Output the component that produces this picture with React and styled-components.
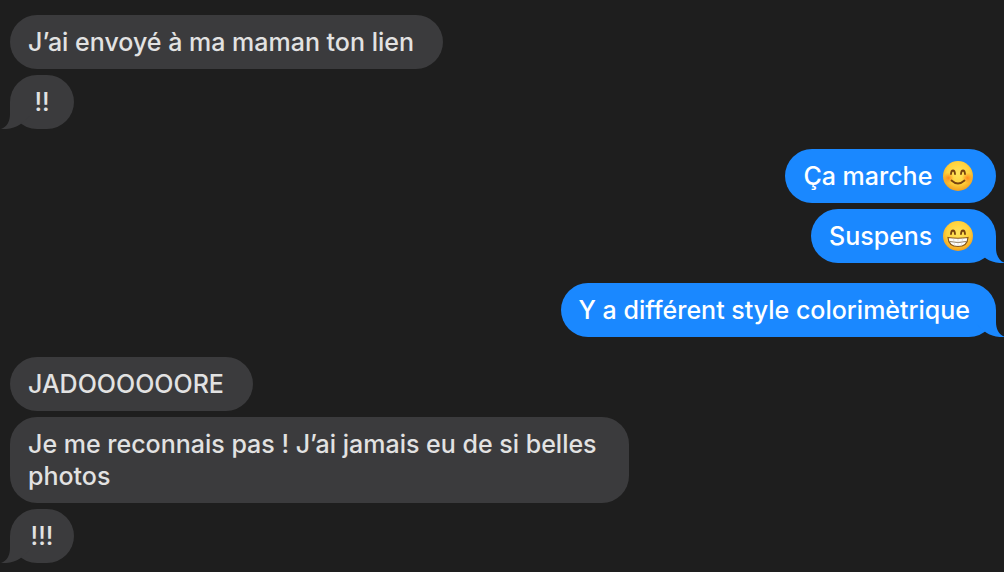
/**
 * Message thread
 *
 * Groups of bubbles, received on the left and sent on the right.
 * The last bubble of a group carries the tail.
 */

import React from 'react';
import styled, { createGlobalStyle, css } from 'styled-components';

const GlobalStyle = createGlobalStyle`
  * {
    box-sizing: border-box;
  }

  body {
    margin: 0;
    background: #1e1e1e;
    font-family: Inter, 'Liberation Sans', sans-serif;
  }
`;

const Thread = styled.main`
  display: flex;
  flex-direction: column;
  gap: 20px;
  padding: 15px 8px 9px 10px;
  overflow: hidden;
`;

const Group = styled.section`
  display: flex;
  flex-direction: column;
  align-items: ${({ $sent }) => ($sent ? 'flex-end' : 'flex-start')};
  gap: 6px;
`;

const Bubble = styled.p`
  position: relative;
  min-width: 64px;
  max-width: min(100%, 619px);
  margin: 0;
  padding: 11px 29px 11px 18px;
  border-radius: 27px;
  background: #3b3b3d;
  color: #e2e2e2;
  font-size: 25px;
  font-weight: 500;
  line-height: 32px;

  ${({ $sent }) => $sent && css`
    padding-right: 26px;
    background: #1a88ff;
    color: #fff;
  `}

  ${({ $short }) => $short && css`
    padding: 11px 18px;
    text-align: center;
  `}
`;

const TailShape = styled.svg`
  position: absolute;
  bottom: 0;
  left: -10px;
  width: 32px;
  height: 27px;
  fill: #3b3b3d;

  ${({ $sent }) => $sent && css`
    right: -10px;
    left: auto;
    fill: #1a88ff;
    transform: scaleX(-1);
  `}
`;

const EmojiIcon = styled.svg`
  width: 32px;
  height: 32px;
  margin: 0 -4px 0 3px;
  vertical-align: top;
`;

const Tail = ({ sent }) => (
  <TailShape $sent={sent} viewBox="0 0 32 27" aria-hidden="true">
    <path d="M10 0V12C10 19 7 25 1 27C8 27.500 15 26 20 22.500L30 14V0Z" />
  </TailShape>
);

const Emoji = ({ name, grin }) => (
  <EmojiIcon viewBox="0 0 32 32" role="img" aria-label={name}>
    <defs>
      <radialGradient id={`${name}-face`} cx=".5" cy=".4" r=".62">
        <stop offset="0" stopColor="#ffe45c" />
        <stop offset=".6" stopColor="#ffd23c" />
        <stop offset="1" stopColor="#f09a1c" />
      </radialGradient>
      <radialGradient id={`${name}-cheek`}>
        <stop offset="0" stopColor="#ff7a1c" stopOpacity=".85" />
        <stop offset="1" stopColor="#ff8a18" stopOpacity="0" />
      </radialGradient>
    </defs>
    <circle cx="16" cy="16" r="15" fill={`url(#${name}-face)`} />
    {!grin && (
      <g fill={`url(#${name}-cheek)`}>
        <circle cx="6.500" cy="18" r="5.500" />
        <circle cx="25.500" cy="18" r="5.500" />
      </g>
    )}
    <g fill="none" stroke="#764310" strokeWidth="1.800" strokeLinecap="round">
      <path d="M9 14Q9.200 10.500 11 10.500T13 14" />
      <path d="M19 14Q19.200 10.500 21 10.500T23 14" />
      {!grin && <path d="M9.500 20.500Q16 26.500 22.500 20.500" />}
    </g>
    {grin && (
      <g>
        <path d="M6 17.500Q16 19 26 17.500Q25.500 26.500 16 26.500T6 17.500Z" fill="#fff" stroke="#87571c" strokeWidth="1.200" />
        <path d="M7.500 21.500Q16 23.500 24.500 21.500" fill="none" stroke="#8f7c62" strokeWidth="1" />
        <path d="M11.500 18.500L12.500 25.500M16 19V26M20.500 18.500L19.500 25.500" fill="none" stroke="#cfcabf" strokeWidth=".5" />
      </g>
    )}
  </EmojiIcon>
);

const Message = ({ sent, tail, short, children }) => (
  <Bubble $sent={sent} $short={short}>
    {tail && <Tail sent={sent} />}
    {children}
  </Bubble>
);

const App = () => (
  <>
    <GlobalStyle />
    <Thread>
      <Group>
        <Message>J’ai envoyé à ma maman ton lien</Message>
        <Message tail short>!!</Message>
      </Group>
      <Group $sent>
        <Message sent>Ça marche <Emoji name="smile" /></Message>
        <Message sent tail>Suspens <Emoji name="grin" grin /></Message>
      </Group>
      <Group $sent>
        <Message sent tail>Y a différent style colorimètrique</Message>
      </Group>
      <Group>
        <Message>JADOOOOOORE</Message>
        <Message>Je me reconnais pas ! J’ai jamais eu de si belles photos</Message>
        <Message tail short>!!!</Message>
      </Group>
    </Thread>
  </>
);

export default App;
